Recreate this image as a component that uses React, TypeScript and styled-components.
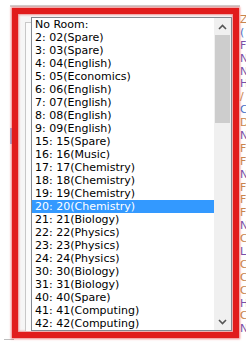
import React from "react";
import styled, { createGlobalStyle } from "styled-components";

const GlobalStyle = createGlobalStyle`
  html, body { margin: 0; padding: 0; background: #ffffff; }
  body { font-family: "DejaVu Sans", Verdana, sans-serif; }
`;

const Page = styled.div`
  width: 247px;
  height: 345px;
  overflow: hidden;
  box-sizing: border-box;
  padding-top: 5px;
  background: #ffffff;
`;

const TopRule = styled.div`
  margin-left: 10px;
  width: 230px;
  height: 2px;
  background: #d2d2d2;
  margin-bottom: 1px;
`;

const Stage = styled.div`
  display: flex;
  align-items: stretch;
`;

const LeftGutter = styled.div`
  width: 12px;
  display: flex;
  flex-direction: column;
  align-items: flex-end;
`;

const BlueMark = styled.div`
  margin-top: 120px;
  width: 2px;
  height: 16px;
  background: #9dbde8;
`;

const Frame = styled.div`
  box-sizing: border-box;
  width: 227px;
  height: 330px;
  border: 6px solid #e11c1c;
  box-shadow: 0 0 2px 1px rgba(225, 28, 28, 0.55), inset 0 0 2px 1px rgba(225, 28, 28, 0.45);
  background: #f6f6f6;
  display: flex;
  padding: 3px 1px 1px 0;
  position: relative;
  z-index: 1;
`;

const SideRail = styled.div`
  width: 13px;
  box-sizing: border-box;
  padding: 5px 0 0 7px;
  display: flex;
`;

const RailBox = styled.div`
  flex: 1;
  border-top: 1px solid #c8c8c8;
  border-left: 1px solid #c8c8c8;
  background: #fbfbfb;
`;

const ListBox = styled.div`
  flex: 1;
  display: flex;
  border: 1px solid #828790;
  background: #ffffff;
  min-width: 0;
`;

const Options = styled.div`
  flex: 1;
  overflow: hidden;
  min-width: 0;
`;

const Option = styled.div<{ $selected?: boolean }>`
  height: 13px;
  line-height: 13px;
  font-size: 11px;
  padding-left: 3px;
  white-space: nowrap;
  color: ${(p) => (p.$selected ? "#ffffff" : "#000000")};
  background: ${(p) => (p.$selected ? "#3399ff" : "transparent")};
`;

const ScrollBar = styled.div`
  width: 17px;
  background: #f0f0f0;
  display: flex;
  flex-direction: column;
`;

const ArrowButton = styled.div`
  height: 17px;
  display: flex;
  align-items: center;
  justify-content: center;
`;

const Thumb = styled.div`
  margin: 0 1px;
  height: 88px;
  background: #cdcdcd;
`;

const Spacer = styled.div`
  flex: 1;
`;

const RightEdge = styled.div`
  width: 8px;
  overflow: hidden;
  padding-top: 6px;
  margin-left: -1px;
`;

const EdgeLetter = styled.div<{ $color: string }>`
  font-size: 11px;
  line-height: 12.9px;
  height: 12.9px;
  color: ${(p) => p.$color};
  padding-left: 2px;
  white-space: nowrap;
`;

const BottomRule = styled.div`
  margin-left: 4px;
  width: 10px;
  height: 1px;
  margin-top: 1px;
  background: #bdbdbd;
`;

const rooms = [
  "No Room:",
  "2: 02(Spare)",
  "3: 03(Spare)",
  "4: 04(English)",
  "5: 05(Economics)",
  "6: 06(English)",
  "7: 07(English)",
  "8: 08(English)",
  "9: 09(English)",
  "15: 15(Spare)",
  "16: 16(Music)",
  "17: 17(Chemistry)",
  "18: 18(Chemistry)",
  "19: 19(Chemistry)",
  "20: 20(Chemistry)",
  "21: 21(Biology)",
  "22: 22(Physics)",
  "23: 23(Physics)",
  "24: 24(Physics)",
  "30: 30(Biology)",
  "31: 31(Biology)",
  "40: 40(Spare)",
  "41: 41(Computing)",
  "42: 42(Computing)",
];

const P = "#7a4fa8";
const O = "#c9864e";
const B = "#4a72c8";

const edge: [string, string][] = [
  ["Z", O],
  ["(", B],
  ["F", P],
  ["N", P],
  ["N", P],
  ["H", P],
  ["/", O],
  ["C", B],
  ["D", O],
  ["N", P],
  ["F", O],
  ["F", O],
  ["N", P],
  ["F", O],
  ["F", O],
  ["F", O],
  ["N", P],
  ["C", O],
  ["L", P],
  ["C", O],
  ["C", O],
  ["C", O],
  ["H", P],
  ["C", O],
  ["N", P],
];

const Chevron = ({ up }: { up?: boolean }) => (
  <svg width="9" height="6" viewBox="0 0 9 6">
    <path
      d={up ? "M1 5 L4.5 1.5 L8 5" : "M1 1 L4.5 4.5 L8 1"}
      fill="none"
      stroke="#555555"
      strokeWidth="1.6"
    />
  </svg>
);

export default function App() {
  return (
    <>
      <GlobalStyle />
      <Page>
        <TopRule />
        <Stage>
          <LeftGutter>
            <BlueMark />
          </LeftGutter>
          <Frame>
            <SideRail>
              <RailBox />
            </SideRail>
            <ListBox>
              <Options>
                {rooms.map((r) => (
                  <Option key={r} $selected={r.startsWith("20:")}>
                    {r}
                  </Option>
                ))}
              </Options>
              <ScrollBar>
                <ArrowButton>
                  <Chevron up />
                </ArrowButton>
                <Thumb />
                <Spacer />
                <ArrowButton>
                  <Chevron />
                </ArrowButton>
              </ScrollBar>
            </ListBox>
          </Frame>
          <RightEdge>
            {edge.map(([ch, c], i) => (
              <EdgeLetter key={i} $color={c}>
                {ch}
              </EdgeLetter>
            ))}
          </RightEdge>
        </Stage>
        <BottomRule />
      </Page>
    </>
  );
}
